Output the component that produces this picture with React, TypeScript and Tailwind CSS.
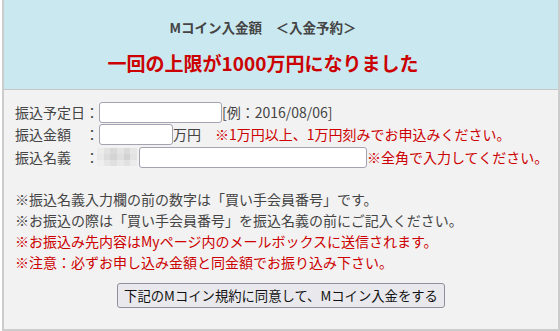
const blur = [
  ["#ececec", "#e2e2e2", "#d9d9d9", "#e4e4e4", "#dadada", "#e6e6e6"],
  ["#e8e8e8", "#dcdcdc", "#d4d4d4", "#dfdfdf", "#d2d2d2", "#e3e3e3"],
  ["#eeeeee", "#e6e6e6", "#e0e0e0", "#e8e8e8", "#e1e1e1", "#ebebeb"],
];

function Field({ w }: { w: string }) {
  return <input type="text" className={`${w} shrink-0 h-[21px] border border-[#a3a3b2] rounded-[3px] bg-white outline-none`} />;
}

export default function App() {
  return (
    <div className="w-[560px] h-[331px] bg-white font-['Noto_Sans_CJK_JP',sans-serif]">
      <div className="ml-[2px] w-[558px] h-[331px] border-x-2 border-b-2 border-[#cccccc] bg-[#f2f2f2] flex flex-col">
        <div className="h-[90px] bg-[#c9e8f0] border-b border-[#c6c6c6] flex flex-col items-center pr-[36px]">
          <div className="pt-[17px] text-[13.5px] leading-[20px] font-bold text-[#444]">Mコイン入金額　＜入金予約＞</div>
          <div className="mt-[12px] text-[19px] leading-[28px] font-bold text-[#cc0000]">一回の上限が1000万円になりました</div>
        </div>

        <div className="pl-[11px] pt-[11px] text-[14px] text-[#444] leading-[21px] whitespace-nowrap">
          <div className="flex items-center h-[22px]">
            <span className="w-[84px] shrink-0">振込予定日：</span>
            <Field w="w-[123px]" />
            <span>[例：2016/08/06]</span>
          </div>
          <div className="flex items-center h-[22px]">
            <span className="w-[84px] shrink-0">振込金額　：</span>
            <Field w="w-[74px]" />
            <span>万円</span>
            <span className="ml-[14px] text-[#cc0000]">※1万円以上、1万円刻みでお申込みください。</span>
          </div>
          <div className="flex items-center h-[22px] mt-[1px]">
            <span className="w-[82px] shrink-0">振込名義　：</span>
            <div className="w-[40px] h-[18px] mr-[2px] shrink-0 flex flex-col">
              {blur.map((row, i) => (
                <div key={i} className="flex flex-1">
                  {row.map((c, j) => (
                    <div key={j} className="flex-1" style={{ backgroundColor: c }} />
                  ))}
                </div>
              ))}
            </div>
            <Field w="w-[228px]" />
            <span className="text-[#cc0000]">※全角で入力してください。</span>
          </div>

          <div className="mt-[21px]">
            <p>※振込名義入力欄の前の数字は「買い手会員番号」です。</p>
            <p>※お振込の際は「買い手会員番号」を振込名義の前にご記入ください。</p>
            <p className="text-[#cc0000]">※お振込み先内容はMyページ内のメールボックスに送信されます。</p>
            <p className="text-[#cc0000]">※注意：必ずお申し込み金額と同金額でお振り込み下さい。</p>
          </div>
        </div>

        <div className="flex justify-center mt-[10px]">
          <button className="h-[25px] px-[6px] text-[13.33px] text-[#111] bg-[#e9e9ed] border border-[#8f8f9d] rounded-[3px]">
            下記のMコイン規約に同意して、Mコイン入金をする
          </button>
        </div>
      </div>
    </div>
  );
}
